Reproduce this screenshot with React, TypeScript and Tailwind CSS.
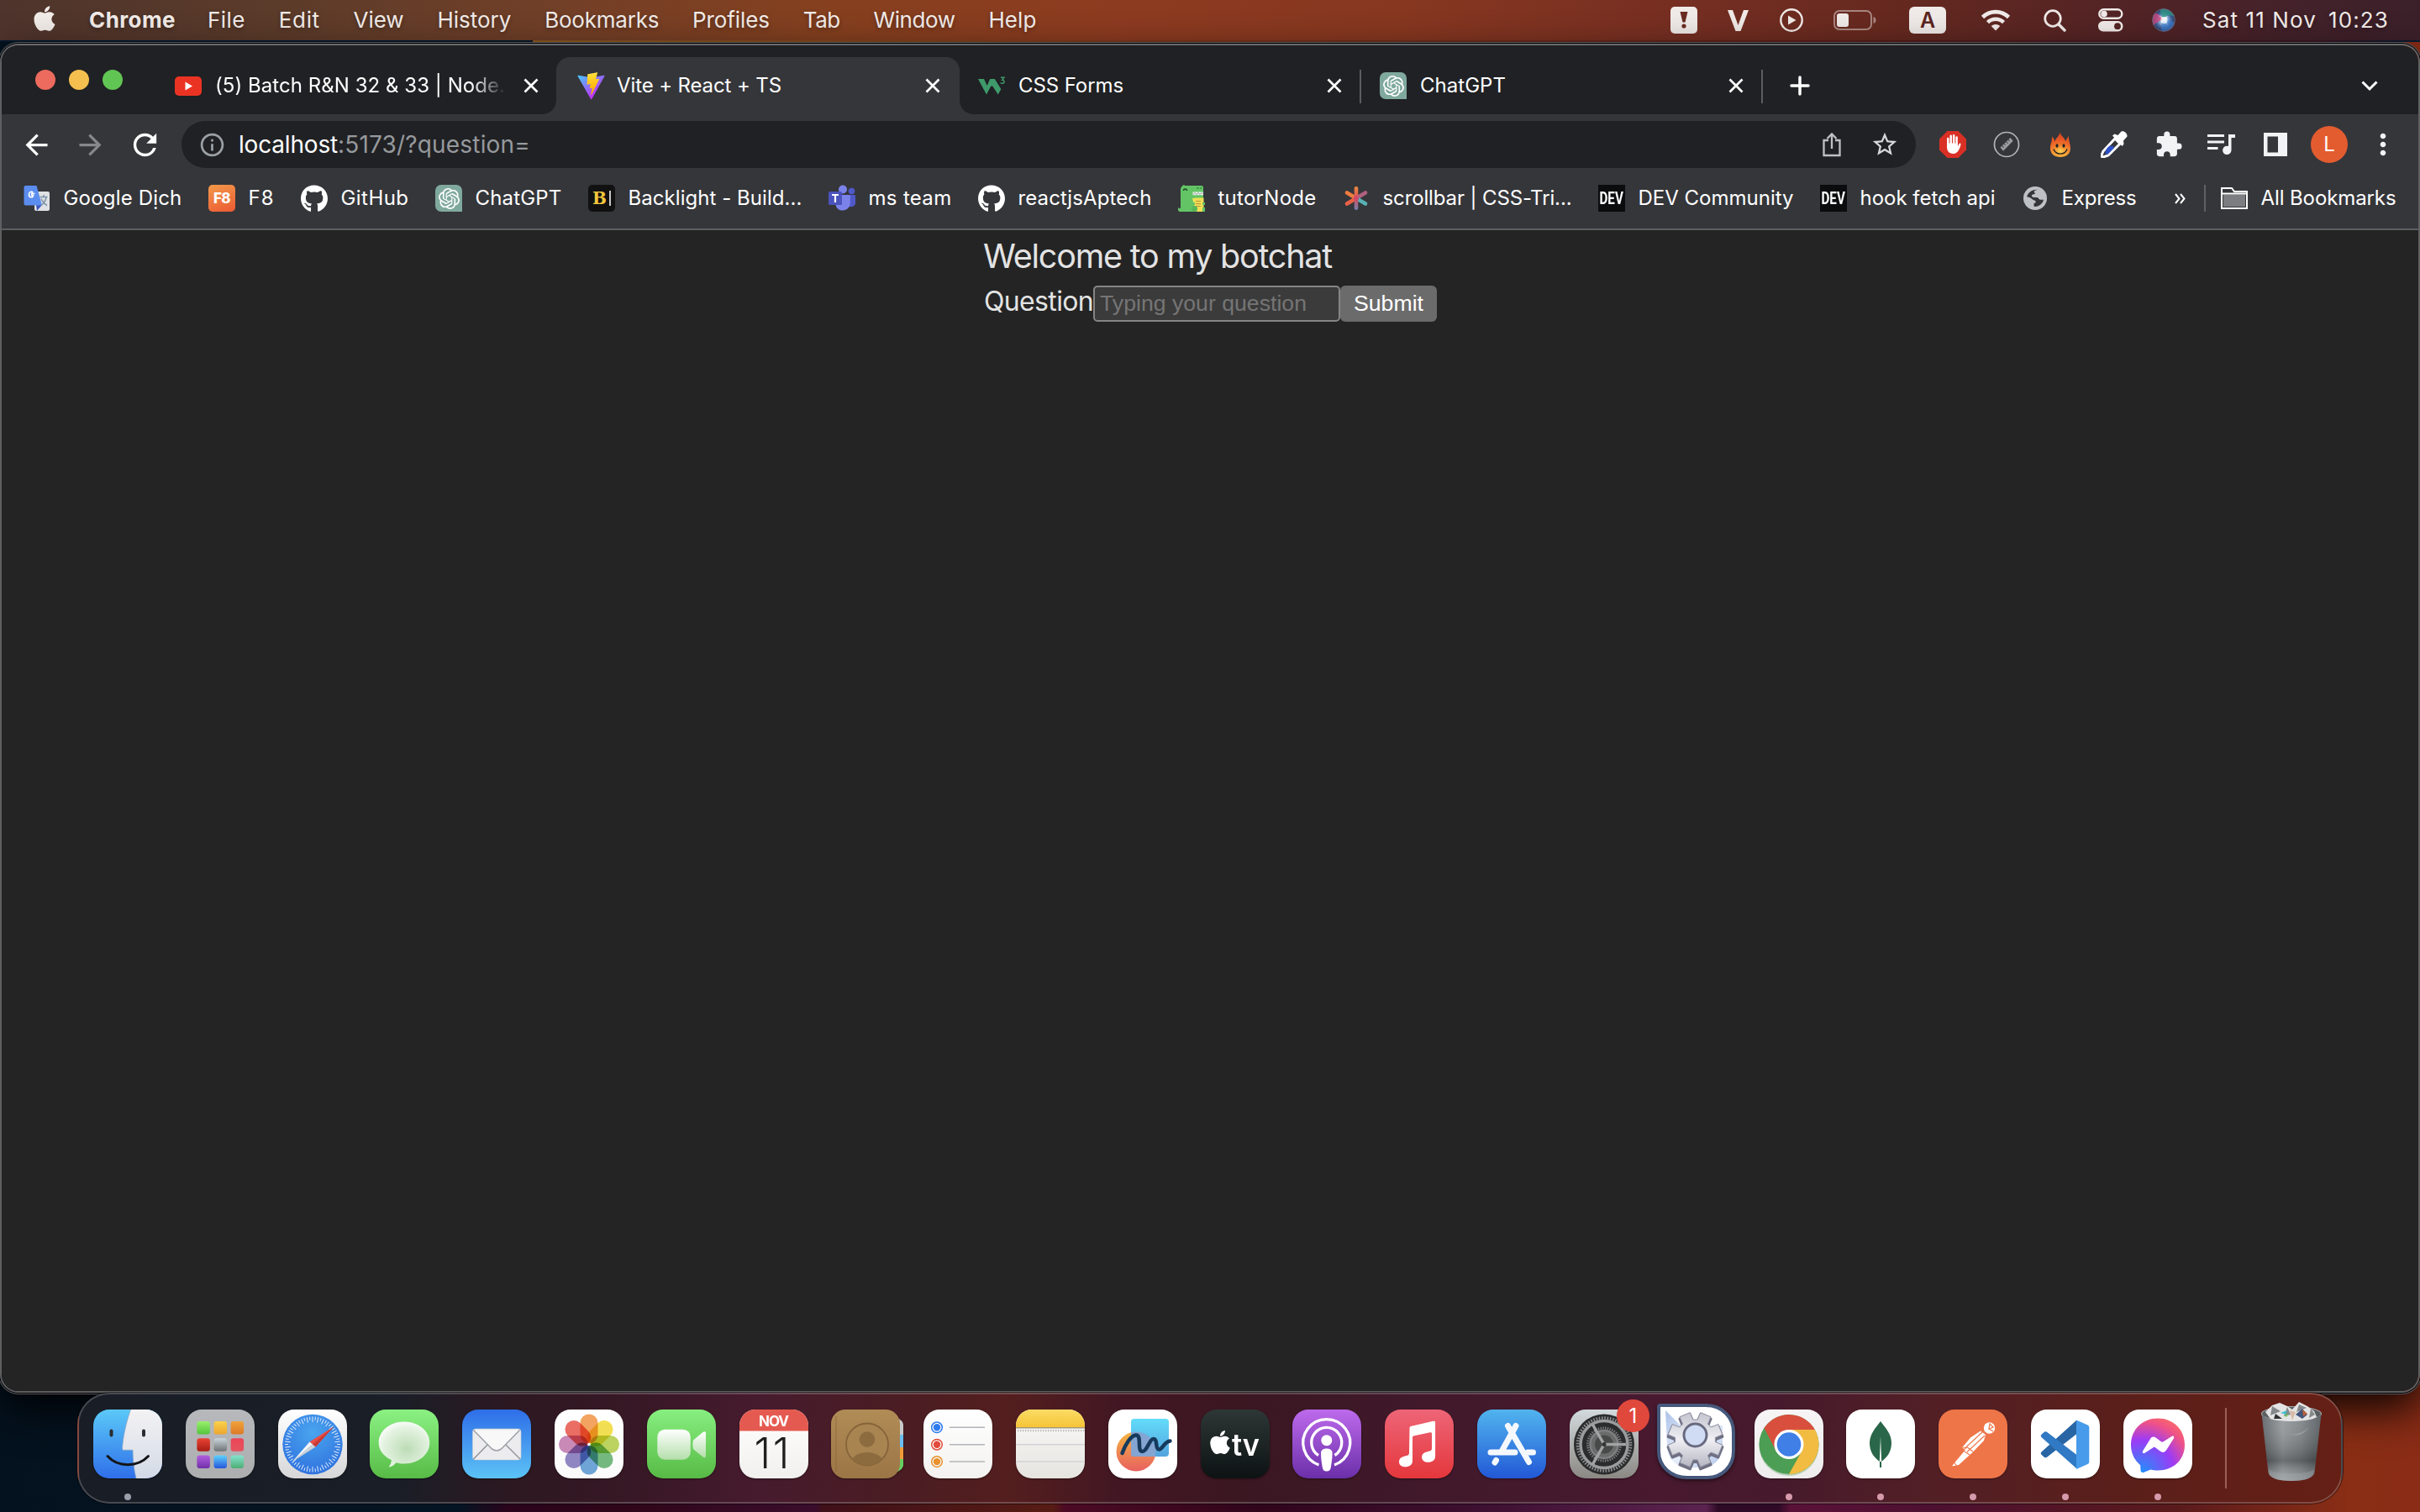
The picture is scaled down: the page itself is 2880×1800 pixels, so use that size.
import React, { useLayoutEffect, useRef, useState } from "react";
import { FaApple, FaGithub } from "react-icons/fa6";
import { SiOpenai } from "react-icons/si";
import {
  MdArrowBack,
  MdArrowForward,
  MdRefresh,
  MdInfoOutline,
  MdExtension,
  MdStarBorder,
  MdMoreVert,
} from "react-icons/md";

/* Single-line label whose tracking is adjusted so that it fills the given width. */
function Label({ w, className = "", children }: { w: number; className?: string; children: string }) {
  const ref = useRef<HTMLSpanElement>(null);
  const [tracking, setTracking] = useState(0);
  useLayoutEffect(() => {
    if (ref.current) {
      const natural = ref.current.getBoundingClientRect().width;
      setTracking((w - natural) / children.length);
    }
  }, [w, children]);
  return (
    <span className={`block shrink-0 whitespace-pre ${className}`} style={{ width: w }}>
      <span ref={ref} style={{ letterSpacing: tracking }}>
        {children}
      </span>
    </span>
  );
}

/* ---------------------------------------------------------------- menu bar */

const menus = [
  { t: "File", w: 45 },
  { t: "Edit", w: 49 },
  { t: "View", w: 60 },
  { t: "History", w: 88 },
  { t: "Bookmarks", w: 136 },
  { t: "Profiles", w: 92 },
  { t: "Tab", w: 44 },
  { t: "Window", w: 97 },
  { t: "Help", w: 57 },
];

function MenuBar() {
  return (
    <div className="flex h-12 w-full shrink-0 items-center bg-[linear-gradient(90deg,#4e342c_0%,#5b3b2a_11%,#703f28_22%,#85401f_34%,#8d3b20_46%,#873720_58%,#752e22_70%,#66291f_78%,#562424_86%,#45222a_94%,#3b202a_100%)] pl-[39px] text-[26px] leading-[48px] text-[#f2ece9] [text-shadow:0_2px_5px_rgba(0,0,0,0.35)]">
      <FaApple className="mt-[-5px] size-[34px] shrink-0 -translate-x-[3px]" />
      <Label w={103} className="ml-[33px] font-bold">Chrome</Label>
      <div className="ml-[38px] flex gap-[39.8px]">
        {menus.map((m) => (
          <Label key={m.t} w={m.w}>{m.t}</Label>
        ))}
      </div>
      <div className="ml-auto flex items-center pr-[37px]">
        <div className="flex size-8 items-center justify-center rounded-[5px] bg-[#f0eae8]">
          <svg className="h-5 w-3" viewBox="0 0 12 20">
            <path d="M1.500 0h9L7.500 12.500h-3z" fill="#6b2c22" />
            <circle cx="6" cy="17" r="2.600" fill="#6b2c22" />
          </svg>
        </div>
        <svg className="ml-9 h-[25px] w-[25px]" viewBox="0 0 25 25">
          <path d="M0 0h6l6.500 18L19 0h6l-9.500 25h-6z" fill="#f0eae8" />
        </svg>
        <svg className="ml-[37px] size-7" viewBox="0 0 28 28">
          <circle cx="14" cy="14" r="12.700" fill="none" stroke="#f0eae8" strokeWidth="2.400" />
          <path d="M10 8.500v11l9.500-5.500z" fill="#f0eae8" />
        </svg>
        <svg className="ml-9 h-6 w-[52px]" viewBox="0 0 52 24">
          <rect x="1" y="1" width="44" height="22" rx="6" fill="none" stroke="#a98680" strokeWidth="2" />
          <rect x="4" y="4" width="14" height="16" rx="3" fill="#f0eae8" />
          <path d="M47.500 8c4 1 4 7 0 8z" fill="#a98680" />
        </svg>
        <div className="ml-[38px] flex h-8 w-11 items-center justify-center rounded-[6px] bg-[#f0eae8] text-[25px] font-semibold leading-8 text-[#5c2420] [text-shadow:none]">
          A
        </div>
        <svg className="ml-[41px] h-[26px] w-[36px]" viewBox="0 0 36 26" fill="none" stroke="#f0eae8">
          <path d="M2.500 9.500a22 22 0 0 1 31 0" strokeWidth="4.600" />
          <path d="M8.500 15.600a13.500 13.500 0 0 1 19 0" strokeWidth="4.600" />
          <path d="M18 25.500l-5.300-5.500a7.800 7.800 0 0 1 10.600 0z" fill="#f0eae8" stroke="none" />
        </svg>
        <svg className="ml-[39px] h-[27px] w-[27px]" viewBox="0 0 27 27" fill="none" stroke="#f0eae8">
          <circle cx="11" cy="11" r="9.300" strokeWidth="2.700" />
          <path d="M18 18l7 7" strokeWidth="3.400" strokeLinecap="round" />
        </svg>
        <svg className="ml-[38px] h-7 w-[30px]" viewBox="0 0 30 28">
          <rect x="1.300" y="1.300" width="27" height="10.500" rx="5.250" fill="none" stroke="#f0eae8" strokeWidth="2.400" />
          <circle cx="7" cy="6.500" r="3.800" fill="#f0eae8" />
          <rect x="0" y="15" width="29.500" height="12.500" rx="6.200" fill="#f0eae8" />
          <circle cx="23" cy="21.200" r="3.900" fill="#542524" />
        </svg>
        <svg className="ml-[34px] size-7" viewBox="0 0 28 28">
          <defs>
            <radialGradient id="siri" cx="50%" cy="50%" r="50%">
              <stop offset="0" stopColor="#ffffff" />
              <stop offset=".25" stopColor="#b9d9ef" />
              <stop offset=".6" stopColor="#4a6fa8" />
              <stop offset="1" stopColor="#23304f" />
            </radialGradient>
            <clipPath id="siriC"><circle cx="14" cy="14" r="13.500" /></clipPath>
          </defs>
          <g clipPath="url(#siriC)">
            <rect width="28" height="28" fill="url(#siri)" />
            <path d="M0 6C6 4 12 10 14 14C8 14 2 20 0 22z" fill="#d8457e" opacity=".75" />
            <path d="M10 0c10-2 18 4 17 10C20 6 16 8 14 14C11 8 9 4 10 0z" fill="#2f9a83" opacity=".75" />
            <path d="M14 14c6-2 10 2 14 3-2 8-8 12-14 11-4-2-4-8 0-14z" fill="#3e7fd6" opacity=".6" />
            <circle cx="14.500" cy="14" r="4" fill="#fff" opacity=".8" />
            <path d="M14 14L7 8l7 3 6-2-4 4 3 7z" fill="#fff" opacity=".55" />
          </g>
          <circle cx="14" cy="14" r="13.300" fill="none" stroke="#6a6a84" strokeWidth="1" />
        </svg>
        <Label w={136} className="ml-[32px]">Sat 11 Nov</Label>
        <Label w={72} className="ml-[14px]">10:23</Label>
      </div>
    </div>
  );
}

/* ---------------------------------------------------------------- tabs */

function Close() {
  return (
    <svg className="size-[18px] shrink-0" viewBox="0 0 18 18" stroke="#fff" strokeWidth="2.700" strokeLinecap="butt">
      <path d="M1.500 1.500l15 15M16.500 1.500l-15 15" />
    </svg>
  );
}

function ViteLogo() {
  return (
    <svg className="h-[33px] w-[35px] shrink-0" viewBox="0 0 410 404">
      <defs>
        <linearGradient id="v1" x1="6" y1="33" x2="235" y2="344" gradientUnits="userSpaceOnUse">
          <stop stopColor="#41D1FF" />
          <stop offset="1" stopColor="#BD34FE" />
        </linearGradient>
        <linearGradient id="v2" x1="194" y1="8" x2="236" y2="292" gradientUnits="userSpaceOnUse">
          <stop stopColor="#FFEA83" />
          <stop offset=".083" stopColor="#FFDD35" />
          <stop offset="1" stopColor="#FFA800" />
        </linearGradient>
      </defs>
      <path d="M399.641 59.525L215.643 388.545C211.844 395.338 202.084 395.378 198.228 388.618L10.582 59.556C6.381 52.190 12.680 43.267 21.028 44.759L205.223 77.682C206.398 77.892 207.601 77.890 208.776 77.676L389.119 44.806C397.439 43.289 403.768 52.143 399.641 59.525Z" fill="url(#v1)" />
      <path d="M292.965 1.574L156.801 28.255C154.563 28.694 152.906 30.590 152.771 32.866L144.395 174.330C144.198 177.662 147.258 180.248 150.510 179.498L188.420 170.749C191.967 169.931 195.172 173.055 194.443 176.622L183.180 231.775C182.422 235.487 185.907 238.661 189.532 237.560L212.947 230.446C216.577 229.344 220.065 232.527 219.297 236.242L201.398 322.875C200.278 328.294 207.486 331.249 210.492 326.603L212.500 323.500L323.454 102.072C325.312 98.365 322.108 94.137 318.036 94.923L279.014 102.454C275.347 103.161 272.227 99.746 273.262 96.158L298.731 7.867C299.767 4.273 296.636 .855 292.965 1.574Z" fill="url(#v2)" />
    </svg>
  );
}

function GptIcon() {
  return (
    <div className="flex size-8 shrink-0 items-center justify-center rounded-[7px] rounded-br-none bg-[#80a99d]">
      <SiOpenai className="size-[25px] text-white" />
    </div>
  );
}

function TabStrip() {
  return (
    <div className="flex h-[82px] w-full shrink-0 bg-[#202124] text-[24px] leading-[38px] text-white">
      <div className="flex h-[82px] w-[660px] items-center pl-[40px]">
        <div className="flex gap-4 pb-0">
          <span className="size-6 rounded-full bg-[#ed6a5e]" />
          <span className="size-6 rounded-full bg-[#f5bf4f]" />
          <span className="size-6 rounded-full bg-[#61c554]" />
        </div>
        <svg className="ml-[62px] mt-[14px] h-[23px] w-8 shrink-0" viewBox="0 0 32 23">
          <rect width="32" height="23" rx="5" fill="#eb3323" />
          <path d="M12.500 6.500v10l8.500-5z" fill="#fff" />
        </svg>
        <div className="ml-[16px] mt-[14px] w-[346px] [mask-image:linear-gradient(90deg,#000_88%,transparent_100%)]">
          <Label w={345}>(5) Batch R&amp;N 32 &amp; 33 | Node.</Label>
        </div>
        <div className="ml-[21px] mt-[14px] flex"><Close /></div>
      </div>
      <div className="relative mt-[14px] flex h-[68px] w-[480px] items-center rounded-t-2xl bg-[#35363a] pl-6">
        <span className="absolute -left-4 bottom-0 size-4 bg-[radial-gradient(circle_at_0_0,transparent_15.5px,#35363a_16px)]" />
        <span className="absolute -right-4 bottom-0 size-4 bg-[radial-gradient(circle_at_100%_0,transparent_15.5px,#35363a_16px)]" />
        <ViteLogo />
        <Label w={196} className="ml-[13px]">Vite + React + TS</Label>
        <div className="ml-auto flex pr-[23px]"><Close /></div>
      </div>
      <div className="mt-[14px] flex h-[68px] w-[476px] items-center pl-[22px]">
        <svg className="h-[23px] w-8 shrink-0" viewBox="0 0 32 23">
          <path d="M0 3h7l3.700 8L14.200 3h5.600L27.300 15l-3.500 6.500L17.200 11.500h-1.900L10 21.500z" fill="#3f9a6b" />
          <path d="M27 1.200h4l-2.300 3c2.200 0 2.700 1.800 2.200 3-.8 1.500-3.400 1.600-4.100 0" fill="none" stroke="#3f9a6b" strokeWidth="1.400" />
        </svg>
        <Label w={125} className="ml-[16px]">CSS Forms</Label>
        <div className="ml-auto flex pr-[21px]"><Close /></div>
      </div>
      <span className="mt-[29px] h-10 w-0.5 bg-[#5c5d60]" />
      <div className="mt-[14px] flex h-[68px] w-[476px] items-center pl-[22px]">
        <GptIcon />
        <Label w={102} className="ml-[16px]">ChatGPT</Label>
        <div className="ml-auto flex pr-[21px]"><Close /></div>
      </div>
      <span className="mt-[29px] h-10 w-0.5 bg-[#5c5d60]" />
      <svg className="ml-[32px] mt-9 size-6" viewBox="0 0 24 24" stroke="#fff" strokeWidth="3.500" strokeLinecap="round">
        <path d="M2 12h20M12 2v20" />
      </svg>
      <svg className="ml-auto mr-[48px] mt-[42px] h-[13px] w-5" viewBox="0 0 20 13" fill="none" stroke="#fff" strokeWidth="3">
        <path d="M1.500 1.500L10 10l8.500-8.500" />
      </svg>
    </div>
  );
}

/* ---------------------------------------------------------------- toolbar */

function Toolbar() {
  return (
    <div className="flex h-[72px] w-full shrink-0 items-center bg-[#35363a] pl-[22px] text-[28px] leading-[56px]">
      <div className="flex items-center gap-[25px] text-white">
        <MdArrowBack className="size-[39px]" />
        <MdArrowForward className="size-[39px] text-[#87888b]" />
        <MdRefresh className="size-[41px]" />
      </div>
      <div className="ml-[23px] flex h-14 w-[2064px] items-center rounded-full bg-[#202124] pl-5 pr-[20px]">
        <MdInfoOutline className="size-[33px] text-[#9aa0a6]" />
        <Label w={118} className="ml-[15px] text-white">localhost</Label>
        <Label w={229} className="text-[#96999d]">:5173/?question=</Label>
        <svg className="ml-auto h-[30px] w-[22px]" viewBox="0 0 22 30" fill="none" stroke="#bdc1c6" strokeWidth="2.300">
          <path d="M7 10H1.500v18h19V10H15M11 20V2.500M5.500 8L11 2.500 16.500 8" />
        </svg>
        <MdStarBorder className="ml-[35px] size-[34px] text-[#d5d7da]" />
      </div>
      <div className="ml-7 flex items-center">
        <svg className="size-8" viewBox="0 0 32 32">
          <path d="M9.500 0h13L32 9.500v13L22.500 32h-13L0 22.500v-13z" fill="#d93025" />
          <path d="M10.300 17V9M13.700 16V5.700M17.200 16V5.200M20.600 17V7.500" stroke="#fff" strokeWidth="2.500" strokeLinecap="round" />
          <path d="M9 14.500h12.900v4l1.600-3.300c.7-1.200 2.200-.8 2 .6-.6 4-3.200 11.200-8.900 11.200C11 27 9 23 9 19z" fill="#fff" />
        </svg>
        <svg className="ml-8 size-8" viewBox="0 0 32 32">
          <circle cx="16" cy="16" r="14.500" fill="none" stroke="#b4b5b7" strokeWidth="1.700" />
          <path d="M8.500 19.500L20.500 8l3.200 3.700-11.700 12z" fill="#9a9b9d" />
          <path d="M10.500 17.500l2 2M13 15l1.500 1.700M15.500 12.700l2 2M18 10.300l1.500 1.700" stroke="#45464a" strokeWidth="1.100" />
        </svg>
        <svg className="ml-[36px] h-8 w-[24px]" viewBox="0 0 24 32">
          <defs>
            <linearGradient id="fire" x1="0" y1="0" x2="0" y2="1">
              <stop offset="0" stopColor="#d8401f" />
              <stop offset=".55" stopColor="#ef6a2a" />
              <stop offset="1" stopColor="#f9b136" />
            </linearGradient>
            <radialGradient id="face" cx="50%" cy="65%" r="50%">
              <stop offset="0" stopColor="#fbd552" />
              <stop offset="1" stopColor="#f28a2c" stopOpacity=".2" />
            </radialGradient>
          </defs>
          <path d="M11.500 1c.5 5 5.500 6 6.500 11 1.500-2 2.500-4.500 4-6-.5 5 2 9 2 14.500C24 27 19 31 12 31S0 27 0 20.500C0 15 2.500 12 2 6.500 4 8 5 10.500 5.500 12.500 6.500 8 11 6.500 11.500 1z" fill="url(#fire)" />
          <ellipse cx="12" cy="21" rx="11" ry="9.500" fill="url(#face)" />
          <ellipse cx="8" cy="17.500" rx="1.500" ry="2.300" fill="#222" />
          <ellipse cx="16" cy="17.500" rx="1.500" ry="2.300" fill="#222" />
          <path d="M4 21.500c2.500 7.500 13.500 7.500 16 0" fill="none" stroke="#222" strokeWidth="1.400" />
        </svg>
        <svg className="ml-[36px] size-8" viewBox="0 0 32 32">
          <path d="M3 24L17 9l6 6L9 29l-6 2-2.500-1z" fill="none" stroke="#fff" strokeWidth="3" />
          <path d="M5 27l2-6 3.500-3.500 4.500.5 1 2-7.500 7.500z" fill="#2b50c8" />
          <path d="M14 5.500l2.500-2 4 1.500 4-4.500c3-1.500 7.500 2 7 6L27 11.500l.5 4-2 2.500z" fill="#fff" />
        </svg>
        <MdExtension className="ml-[32px] size-[34px] text-[#f1f3f4]" />
        <svg className="ml-[29px] h-[26px] w-[34px]" viewBox="0 0 34 26">
          <path d="M0 2.500h20M0 10h20M0 17.500h12.500" stroke="#f1f3f4" strokeWidth="3" />
          <path d="M25 1h8v4h-4.500v15a5.200 5.200 0 1 1-3.500-5z" fill="#f1f3f4" />
        </svg>
        <svg className="ml-[33px] size-7" viewBox="0 0 28 28">
          <path d="M0 0h28v28H0zM4.500 4.500v19H17v-19z" fill="#f1f3f4" fillRule="evenodd" />
        </svg>
        <div className="ml-7 flex size-11 items-center justify-center rounded-full bg-[#e35c30] text-[24px] leading-none text-white">L</div>
        <MdMoreVert className="ml-[22px] size-10 text-[#f1f3f4]" />
      </div>
    </div>
  );
}

/* ---------------------------------------------------------------- bookmarks */

const translateIcon = (
  <svg className="size-8" viewBox="0 0 32 32">
    <rect x="13" y="8" width="18" height="23" rx="2" fill="#dfe1e4" />
    <path d="M15 24h7l-6 7z" fill="#3d56c0" />
    <path d="M2.500 1h13l6.500 23.500H2.500a2 2 0 0 1-2-2V3a2 2 0 0 1 2-2z" fill="#5b8def" />
    <path d="M13.500 10.500H9.800v2h1.700c-.5 3.200-5 3-5-.8 0-3.500 3.200-4.300 4.800-2.300" fill="none" stroke="#fff" strokeWidth="1.700" />
    <path d="M19.500 14.500h9M24 12v2.500M27 15c-1 5-4 8-6 9.500M21 16.500c1.500 4 4.500 6.500 7 8" fill="none" stroke="#7e93a8" strokeWidth="1.500" />
  </svg>
);
const f8Icon = (
  <div className="flex size-8 items-center justify-center rounded-[5px] bg-[linear-gradient(160deg,#f29a4a,#ec5a33)] text-[17px] font-extrabold tracking-[-0.5px] text-white">
    F8
  </div>
);
const blIcon = (
  <div className="flex size-8 items-center justify-center gap-[3px] rounded-[5px] bg-[#111]">
    <span className="font-['DejaVu_Serif'] text-[20px] font-bold leading-8 text-[#f3c63c]">B</span>
    <span className="h-[18px] w-[2px] bg-[#c8c8c8]" />
  </div>
);
const teamsIcon = (
  <svg className="size-8" viewBox="0 0 32 32">
    <circle cx="27.500" cy="7.500" r="3.800" fill="#5059c9" />
    <path d="M22 12h9a1.200 1.200 0 0 1 1.200 1.200V21c0 5-6 7-9 3.500z" fill="#5059c9" />
    <circle cx="17" cy="5.500" r="5" fill="#7b83eb" />
    <path d="M10 12h14.500a1.300 1.300 0 0 1 1.300 1.300V22a9 9 0 0 1-17 3.500z" fill="#7b83eb" />
    <rect x="0" y="8" width="16" height="16" rx="1.500" fill="#4b53bc" />
    <path d="M4 12h8M8 12v9" stroke="#fff" strokeWidth="2.200" />
  </svg>
);
const dinoIcon = (
  <svg className="size-8" viewBox="0 0 32 32">
    <path d="M3 5c0-1 1-2.500 2-3.500L6.500 0l2 1h19c1.500 0 2.500.7 2.500 2.500V32H1.500C-.5 30.500-.5 28 .5 27c.8 1.500 2 1.700 2.500 0z" fill="#63c466" />
    <path d="M6.500 7c0-2.700 4-2.700 4 0" fill="none" stroke="#1d4a22" strokeWidth="1.500" />
    <path d="M22.500 4h2M26.500 4h1.500" stroke="#2e7a35" strokeWidth="1.600" />
    <path d="M17.500 8.500H30v3.800H17.500z" fill="#eef5ef" />
    <path d="M18 11.500l2-2 2 2 2-2 2 2 2-2 2 2" stroke="#7f8a80" strokeWidth=".9" fill="none" />
    <path d="M17 16l4-.5h9.500V32H24c-2 0-4-1-4-3z" fill="#efdf55" />
    <path d="M21 19.500h6M21 22.500h6M21 25.500h6" stroke="#b8923a" strokeWidth="1.200" />
    <path d="M16 21h4v3h-4zM29 21h3v3h-3z" fill="#63c466" />
    <circle cx="19.500" cy="28.500" r="3.500" fill="#55b65a" />
    <path d="M29 27h3v5h-3z" fill="#63c466" />
  </svg>
);
const starIcon = (
  <svg className="size-8" viewBox="0 0 32 32" strokeWidth="4.600" strokeLinecap="round">
    <defs>
      <linearGradient id="ct" x1="0" y1="2" x2="0" y2="30" gradientUnits="userSpaceOnUse">
        <stop offset="0" stopColor="#f08c3a" />
        <stop offset=".5" stopColor="#d8505f" />
        <stop offset="1" stopColor="#6d7fb0" />
      </linearGradient>
    </defs>
    <path d="M16 16L5 9.500" stroke="#ee7b3e" />
    <path d="M16 16l-11 6.500" stroke="#ea6246" />
    <path d="M16 16l11-6.500" stroke="#b0617f" />
    <path d="M16 16l11 6.500" stroke="#58b2b4" />
    <path d="M16 4.300l.01 23.400" stroke="url(#ct)" />
    <circle cx="16" cy="16" r="3" fill="#d2486a" />
  </svg>
);
const devIcon = (
  <div className="flex size-8 items-center justify-center bg-[#0b0c0d]">
    <span className="scale-x-[0.76] font-['Roboto'] text-[20px] font-bold leading-8 text-white">DEV</span>
  </div>
);
const globeIcon = (
  <svg className="size-8" viewBox="0 0 32 32">
    <circle cx="16" cy="16" r="14" fill="#bdc1c6" />
    <path d="M19.500 5.500c-1.500 1-3.500.8-4.500 2-.8 1.200.2 2.300 1.500 2.500-1 1.500-3.500.8-4.500 2.500-.8 1.500 1 2.500 3 2.500h3c1.800 0 2 2 3.500 2.500 1.300.5 3 .2 4.500.3-.8 4-4.500 8-10 8.200-1 0-1.500-.5-1.500-1.500v-2.500c2 0 2.500-1.200 2-2.500-.5-1.200-2.500-1-3.500-2-1.800-1.800-4.500-3-8-3.500C4.500 9.500 9 5 15 4.800z" fill="#35363a" />
    <path d="M19.500 5.500c-2 .5-6 .3-9 2.500C8 10 6.500 12 6 14.500 4.500 17 7 22 10 24.500L5 23 2.500 16 6 7l9-4.800z" fill="#bdc1c6" />
  </svg>
);
const gh = <FaGithub className="size-[33px] text-white" />;

const bookmarks = [
  { icon: translateIcon, t: "Google Dịch", w: 141 },
  { icon: f8Icon, t: "F8", w: 31 },
  { icon: gh, t: "GitHub", w: 81 },
  { icon: <GptIcon />, t: "ChatGPT", w: 103 },
  { icon: blIcon, t: "Backlight - Build...", w: 207 },
  { icon: teamsIcon, t: "ms team", w: 99 },
  { icon: gh, t: "reactjsAptech", w: 159 },
  { icon: dinoIcon, t: "tutorNode", w: 117 },
  { icon: starIcon, t: "scrollbar | CSS-Tri...", w: 225 },
  { icon: devIcon, t: "DEV Community", w: 185 },
  { icon: devIcon, t: "hook fetch api", w: 161 },
  { icon: globeIcon, t: "Express", w: 89 },
];

function BookmarksBar() {
  return (
    <div className="flex h-16 w-full shrink-0 items-center bg-[#35363a] pb-2 pl-[26px] text-[24px] leading-10 text-white">
      <div className="flex gap-[31.500px]">
        {bookmarks.map((b, i) => (
          <div key={i} className="flex h-10 items-center">
            <span className="mr-[15.500px] flex w-8 shrink-0 items-center justify-center">{b.icon}</span>
            <Label w={b.w}>{b.t}</Label>
          </div>
        ))}
      </div>
      <svg className="ml-[45px] h-[13px] w-[13px]" viewBox="0 0 13 13" fill="none" stroke="#fff" strokeWidth="2">
        <path d="M1 1l4.500 5.500L1 12M7 1l4.500 5.500L7 12" />
      </svg>
      <span className="ml-[22px] h-8 w-0.5 bg-[#5f6064]" />
      <svg className="ml-[18px] h-[26px] w-8" viewBox="0 0 32 26">
        <path d="M1 1h12l3 4h15v20H1z" fill="none" stroke="#fff" strokeWidth="2" />
        <path d="M3 8.500h26V23H3z" fill="#7c7d80" />
        <path d="M1 7.500h30" stroke="#fff" strokeWidth="2" />
      </svg>
      <Label w={161} className="ml-[16px]">All Bookmarks</Label>
    </div>
  );
}

/* ---------------------------------------------------------------- page */

function Page() {
  return (
    <div className="flex-1 bg-[#242424] pl-[1168px] pt-px text-[#e3e3e3]">
      <Label w={415} className="text-[39.5px] leading-[60px]">Welcome to my botchat</Label>
      <form className="mt-[5px] flex h-[44px] pl-px" onSubmit={(e) => e.preventDefault()}>
        <Label w={130} className="text-[32px] leading-[38px]">Question</Label>
        <div className="flex h-[43px] w-[294px] items-center rounded-[5px] border-2 border-[#858585] bg-[#3b3b3b] pl-[6px] font-['Liberation_Sans'] text-[26.67px] leading-[43px] text-[#757575]">
          <Label w={246}>Typing your question</Label>
        </div>
        <button className="flex h-[43px] w-[115px] items-center justify-center rounded-[6px] bg-[#6b6b6b] font-['Liberation_Sans'] text-[26.67px] leading-[43px] text-white">
          Submit
        </button>
      </form>
    </div>
  );
}

/* ---------------------------------------------------------------- dock */

function Tile({ id, from, to, children }: { id: string; from: string; to: string; children?: React.ReactNode }) {
  return (
    <svg className="size-[82px] overflow-visible drop-shadow-[0_1px_1px_rgba(0,0,0,0.4)]" viewBox="0 0 82 82">
      <defs>
        <linearGradient id={`${id}-bg`} x1="0" y1="0" x2="0" y2="1">
          <stop offset="0" stopColor={from} />
          <stop offset="1" stopColor={to} />
        </linearGradient>
        <clipPath id={`${id}-clip`}>
          <rect width="82" height="82" rx="19" />
        </clipPath>
      </defs>
      <g clipPath={`url(#${id}-clip)`}>
        <rect width="82" height="82" fill={`url(#${id}-bg)`} />
        {children}
      </g>
    </svg>
  );
}

function Finder() {
  return (
    <Tile id="finder" from="#5bc9f8" to="#2f6fea">
      <defs>
        <linearGradient id="fface" x1="0" y1="0" x2="0" y2="1">
          <stop offset="0" stopColor="#f3f2f4" />
          <stop offset="1" stopColor="#d3dae6" />
        </linearGradient>
      </defs>
      <path d="M44.500 0C39 16 35.500 32 34.500 46c0 1.500.5 2.300 2 2.300H47c0 12 1.500 23 4 34h31V0z" fill="url(#fface)" />
      <path d="M44.500 0C39 16 35.500 32 34.500 46c0 1.500.5 2.300 2 2.300H47c0 12 1.500 23 4 34" fill="none" stroke="#8aa6c8" strokeWidth=".8" />
      <path d="M21.500 25.500v5M60 25.500v5" stroke="#2a2c30" strokeWidth="4" strokeLinecap="round" />
      <path d="M17 55.500c12 13.500 36 13.500 48.500 0" fill="none" stroke="#141518" strokeWidth="3" strokeLinecap="round" />
    </Tile>
  );
}

const padColors: [string, string][] = [
  ["#9af06e", "#53c43a"], ["#f9d24c", "#eda52f"], ["#f0a33c", "#dd7a27"],
  ["#ea4434", "#a81d14"], ["#c9d6dc", "#6f7375"], ["#ed4459", "#e4545e"],
  ["#b25fe0", "#7030a8"], ["#5ed3fb", "#2756dc"], ["#84e3cf", "#4fae75"],
];
function Launchpad() {
  return (
    <Tile id="lp" from="#b7b8bb" to="#adaeb0">
      {padColors.map(([a, b], i) => (
        <g key={i}>
          <linearGradient id={`pad${i}`} x1="0" y1="0" x2="0" y2="1">
            <stop offset="0" stopColor={a} />
            <stop offset="1" stopColor={b} />
          </linearGradient>
          <rect x={13.4 + (i % 3) * 20.1} y={14 + Math.floor(i / 3) * 20.2} width="15.500" height="15.500" rx="3.200" fill={`url(#pad${i})`} />
        </g>
      ))}
    </Tile>
  );
}

function Safari() {
  return (
    <Tile id="saf" from="#ffffff" to="#d6d6d8">
      <defs>
        <radialGradient id="safb" cx="50%" cy="30%" r="75%">
          <stop offset="0" stopColor="#4aa5ef" />
          <stop offset="1" stopColor="#2e6fdd" />
        </radialGradient>
      </defs>
      <circle cx="41" cy="41.500" r="35.700" fill="url(#safb)" />
      {Array.from({ length: 60 }, (_, i) => (
        <path
          key={i}
          d={i % 2 ? "M41 8.500v4" : "M41 8.500v6.500"}
          stroke="#dbe9fb"
          strokeWidth="1"
          transform={`rotate(${i * 6} 41 41.5)`}
        />
      ))}
      <path d="M66 20.500L37.500 38.500l7 6z" fill="#ea4f46" />
      <path d="M66 20.500L41 41.500l3.500 3z" fill="#c93a34" />
      <path d="M16.500 62.500l21-24 3.500 3z" fill="#f6f6f6" />
      <path d="M16.500 62.500l28-18-3.500-3z" fill="#cfd2d6" />
    </Tile>
  );
}

function Messages() {
  return (
    <Tile id="msg" from="#8bf183" to="#57bb46">
      <defs>
        <radialGradient id="bub" cx="55%" cy="60%" r="65%">
          <stop offset="0" stopColor="#bddcb6" />
          <stop offset=".7" stopColor="#e3f2e0" />
          <stop offset="1" stopColor="#ffffff" />
        </radialGradient>
      </defs>
      <path d="M41 14.500c17 0 30.300 11 30.300 25S58 64.500 41 64.500c-3.500 0-6.500-.5-9.500-1.300-2.500 3-5.500 5-9 5.300 2-2.500 3.500-5.500 3.200-8.500C16 55.500 10.700 48 10.700 39.500c0-14 13.300-25 30.300-25z" fill="url(#bub)" />
    </Tile>
  );
}

function Mail() {
  return (
    <Tile id="mail" from="#2e6ee8" to="#5cc3f6">
      <rect x="12.500" y="23" width="57.500" height="37" rx="3.500" fill="#ececee" stroke="#c8ccd2" strokeWidth=".6" />
      <path d="M13.500 59L32 40M69 59L50 40" stroke="#8b8f96" strokeWidth="1.300" />
      <path d="M13.500 24.500L34 45.500c4 4.500 10 4.500 14 0l20.500-21" fill="#f8f8f9" stroke="#9da1a7" strokeWidth="1.500" />
    </Tile>
  );
}

const petals = ["#f2994a", "#f3dc3a", "#b5cf4b", "#63b26f", "#5c9bd5", "#8379bd", "#c47bb0", "#ea5a50"];
function Photos() {
  return (
    <Tile id="ph" from="#ffffff" to="#fafafa">
      {petals.map((c, i) => (
        <rect
          key={c}
          x="30.500"
          y="5.500"
          width="21"
          height="35"
          rx="10.500"
          fill={c}
          className="mix-blend-multiply"
          opacity=".88"
          transform={`rotate(${i * 45} 41 41.5)`}
        />
      ))}
      <circle cx="41" cy="41.500" r="1.800" fill="#fff" />
    </Tile>
  );
}

function FaceTime() {
  return (
    <Tile id="ft" from="#87ef80" to="#57ba45">
      <defs>
        <linearGradient id="ftg" x1="0" y1="0" x2="0" y2="1">
          <stop offset="0" stopColor="#fff" />
          <stop offset="1" stopColor="#b4dfab" />
        </linearGradient>
      </defs>
      <rect x="12.300" y="23.700" width="39.500" height="36" rx="9" fill="url(#ftg)" />
      <path d="M55.500 36l11-9c2-1.500 3.500-.7 3.500 1.200v27c0 2-1.500 2.700-3.500 1.200l-11-9c-1.500-1.300-1.500-10 0-11.400z" fill="url(#ftg)" />
    </Tile>
  );
}

function Calendar() {
  return (
    <Tile id="cal" from="#ffffff" to="#f1f0ee">
      <rect width="82" height="25.500" fill="#e55a50" />
      <text x="41" y="19.700" textAnchor="middle" fontFamily="Inter" fontWeight="700" fontSize="17" textLength="36" fill="#fff">NOV</text>
      <text x="38.500" y="70" textAnchor="middle" fontFamily="Inter" fontWeight="300" fontSize="50" textLength="42" fill="#1f1f1f">11</text>
    </Tile>
  );
}

function Contacts() {
  return (
    <svg className="size-[82px] overflow-visible drop-shadow-[0_1px_1px_rgba(0,0,0,0.4)]" viewBox="0 0 82 82">
      <defs>
        <linearGradient id="cob" x1="0" y1="0" x2="0" y2="1">
          <stop offset="0" stopColor="#b08c56" />
          <stop offset="1" stopColor="#9c7546" />
        </linearGradient>
      </defs>
      <path d="M76 10q10 2 10 8v12H76z" fill="#c9c9c9" />
      <path d="M76 30h10v15H76z" fill="#6bbcf0" />
      <path d="M76 45h10v14H76z" fill="#f09a38" />
      <path d="M76 59h10v8q-2 6-10 8z" fill="#69ce62" />
      <rect width="82" height="82" rx="17" fill="url(#cob)" />
      <path d="M6 8v66" stroke="#8d6b3e" strokeWidth="1.500" opacity=".6" />
      <clipPath id="coc"><circle cx="43" cy="41.500" r="25" /></clipPath>
      <circle cx="43" cy="41.500" r="25" fill="#a88450" stroke="#86643a" strokeWidth="1.800" />
      <circle cx="43" cy="35.500" r="9.300" fill="#8c6b3f" />
      <ellipse cx="43" cy="65" rx="20" ry="14" fill="#8c6b3f" clipPath="url(#coc)" />
    </svg>
  );
}

function Reminders() {
  return (
    <Tile id="rem" from="#ffffff" to="#f3f2f0">
      {["#2f7bee", "#e24a3b", "#e8912d"].map((c, i) => (
        <g key={c}>
          <circle cx="16" cy={21.3 + i * 20.4} r="6.300" fill="none" stroke={c} strokeWidth="1.500" />
          <circle cx="16" cy={21.3 + i * 20.4} r="4.200" fill={c} />
          <path d={`M31 ${21.3 + i * 20.4}h42`} stroke="#b3b4b8" strokeWidth="1.500" />
        </g>
      ))}
    </Tile>
  );
}

function Notes() {
  return (
    <Tile id="notes" from="#fafafa" to="#e6e4df">
      <defs>
        <linearGradient id="ny" x1="0" y1="0" x2="0" y2="1">
          <stop offset="0" stopColor="#fbdc66" />
          <stop offset="1" stopColor="#f6c437" />
        </linearGradient>
      </defs>
      <rect width="82" height="21" fill="url(#ny)" />
      <path d="M0 21.800h82" stroke="#a79a78" strokeWidth="1.600" />
      <path d="M2 25.300h80" stroke="#a5a5a5" strokeWidth="1.400" strokeDasharray="1.400 1.600" />
      <path d="M0 41.700h82M0 62h82" stroke="#d3d3d5" strokeWidth="1.500" />
    </Tile>
  );
}

function Freeform() {
  return (
    <Tile id="free" from="#ffffff" to="#ffffff">
      <defs>
        <linearGradient id="fo" x1="0" y1="0" x2="0" y2="1">
          <stop offset="0" stopColor="#f4b63f" />
          <stop offset=".5" stopColor="#ee8a52" />
          <stop offset="1" stopColor="#e8605f" />
        </linearGradient>
        <linearGradient id="fb" x1="0" y1="0" x2="0" y2="1">
          <stop offset="0" stopColor="#63dcfa" />
          <stop offset="1" stopColor="#54a3dd" />
        </linearGradient>
        <clipPath id="fbc"><rect x="27" y="11" width="45" height="45" rx="4" /></clipPath>
      </defs>
      <circle cx="33" cy="50" r="23.500" fill="url(#fo)" />
      <rect x="27" y="11" width="45" height="45" rx="4" fill="url(#fb)" />
      <circle cx="33" cy="50" r="23.500" fill="#84a4d2" clipPath="url(#fbc)" />
      <path d="M16.500 52C20 42 27 30.500 33 30.500c7.500 0 .5 19.500 7.500 19.500 5.500 0 8.500-15 13-15 6 0 1.500 12.500 7 12.500 4 0 6-9.500 13-10" fill="none" stroke="#163a5c" strokeWidth="4.500" strokeLinecap="round" />
    </Tile>
  );
}

function Tv() {
  return (
    <Tile id="tv" from="#2d3735" to="#0d1213">
      <g transform="translate(7 23)" color="#fff">
        <FaApple size={32} />
      </g>
      <text x="37" y="54.500" fontFamily="Inter" fontWeight="600" fontSize="36" textLength="33" lengthAdjust="spacingAndGlyphs" fill="#fff">tv</text>
    </Tile>
  );
}

function Podcasts() {
  return (
    <Tile id="pod" from="#bd6aec" to="#6b2fa9">
      <g fill="none" stroke="#fff" strokeWidth="3.300">
        <path d="M31.500 66a28 28 0 1 1 18.500 0" />
        <path d="M31 54.500a18 18 0 1 1 19.500 0" />
      </g>
      <circle cx="40.800" cy="36.700" r="6.500" fill="#fff" />
      <path d="M34 52c0-4 3-5.500 6.800-5.500s6.800 1.500 6.800 5.500c0 6-1 12-1.800 17-.5 3-2 4.500-5 4.500s-4.500-1.500-5-4.500C35 64 34 58 34 52z" fill="#fff" />
    </Tile>
  );
}

function Music() {
  return (
    <Tile id="mus" from="#ee6577" to="#e4373c">
      <path d="M29.500 22.500c0-1.700.7-2.500 2.300-2.800l26-6c1.500-.3 2.300.3 2.300 1.800v40c0 5-4 7.300-8.500 7.300-4 0-7.500-1.800-7.500-6 0-4.500 3.500-6 8-7 3-.6 3.900-1.200 3.900-4V29c0-1.500-.7-2-2.200-1.700L35 31.200c-1.500.3-2 1-2 2.500V61c0 5-4 7.300-8.500 7.300-4 0-7.500-1.800-7.500-6 0-4.500 3.500-6 7.500-7 3.500-.7 4.500-1.300 4.500-4z" fill="#fff" />
    </Tile>
  );
}

function AppStore() {
  return (
    <Tile id="as" from="#51b4ee" to="#2258d6">
      <g fill="none" stroke="#f4f8fd" strokeWidth="7" strokeLinecap="round">
        <path d="M46 19.500L29 50" />
        <path d="M36.500 19.500L61.500 62.500" />
        <path d="M16 51h29M60 51h6.500" />
        <path d="M22.500 60.500l-1.500 2.500" />
      </g>
    </Tile>
  );
}

function Settings() {
  return (
    <div className="relative size-[82px]">
      <Tile id="set" from="#d3dadd" to="#8b8883">
        <circle cx="41" cy="41.500" r="36" fill="#2b2c2d" />
        <circle cx="41" cy="41.500" r="31.500" fill="none" stroke="#8e8f90" strokeWidth="3.500" strokeDasharray="1.600 1.700" />
        <circle cx="41" cy="41.500" r="28" fill="none" stroke="#9b9c9d" strokeWidth="3.500" />
        <circle cx="41" cy="41.500" r="19.500" fill="none" stroke="#7c7d7e" strokeWidth="3" strokeDasharray="1.400 1.400" />
        <circle cx="41" cy="41.500" r="16.500" fill="#6a6b6b" stroke="#7f8081" strokeWidth="2.500" />
        <circle cx="41" cy="41.500" r="11" fill="#484949" />
        <path d="M41 41.500h26M41 41.500L27.500 18M41 41.500L27.500 65" stroke="#a2a3a4" strokeWidth="3.500" />
        <circle cx="41" cy="41.500" r="2.500" fill="#333" />
      </Tile>
      <span className="absolute -top-[12px] left-[56px] flex size-[39px] items-center justify-center rounded-full bg-[#e0483c] text-[24px] leading-none text-white">
        1
      </span>
    </div>
  );
}

function gearPath(cx: number, cy: number, teeth: number, outer: number, inner: number) {
  const step = (Math.PI * 2) / teeth;
  const pts: string[] = [];
  for (let i = 0; i < teeth; i++) {
    const a = i * step - Math.PI / 2 + step / 2;
    const at = (r: number, o: number) => `${(cx + r * Math.cos(a + o)).toFixed(1)} ${(cy + r * Math.sin(a + o)).toFixed(1)}`;
    pts.push(at(inner, -step * 0.36), at(outer, -step * 0.26), at(outer, step * 0.26), at(inner, step * 0.36));
  }
  return `M${pts.join("L")}Z`;
}

function Config() {
  const gear = gearPath(45.5, 43, 8, 33, 24);
  return (
    <svg className="h-[92px] w-[93px] -translate-y-[2px] overflow-visible drop-shadow-[0_2px_2px_rgba(0,0,0,0.5)]" viewBox="0 0 93 92">
      <defs>
        <linearGradient id="cfg" x1="0" y1="0" x2="1" y2="1">
          <stop offset="0" stopColor="#9db7e6" />
          <stop offset=".5" stopColor="#e4ecf9" />
          <stop offset="1" stopColor="#a9bfe8" />
        </linearGradient>
        <linearGradient id="cgg" x1="0" y1="0" x2="0" y2="1">
          <stop offset="0" stopColor="#c4c4cf" />
          <stop offset=".5" stopColor="#efeff4" />
          <stop offset="1" stopColor="#b6b6c2" />
        </linearGradient>
      </defs>
      <path d="M4 2h54c20 0 33 15 33 32v23c0 18-14 31-31 31H36C17 88 2 75 2 57V4q0-2 2-2z" fill="#fff" stroke="#46587c" strokeWidth="4" />
      <path d="M10 8l18 18h50v22c0 16-8 28-26 28H40C22 76 12 66 12 50z" fill="url(#cfg)" opacity=".85" />
      <path d={gear} transform="translate(0 2.500)" fill="#6f7083" stroke="#6f7083" strokeWidth="3" strokeLinejoin="round" />
      <path d={gear} fill="url(#cgg)" stroke="#8f90a2" strokeWidth="1" strokeLinejoin="round" />
      <circle cx="45.500" cy="37.500" r="13.500" fill="#cfdcf4" stroke="#686a80" strokeWidth="3" />
    </svg>
  );
}

function Chrome() {
  return (
    <Tile id="chr" from="#f7f4f5" to="#efeced">
      <circle cx="41" cy="43.500" r="35.500" fill="#4c9a52" opacity=".35" />
      <circle cx="41" cy="41.500" r="35.500" fill="#4c9e54" />
      <path d="M41 24h30.800A35.500 35.500 0 0 1 41 77L56 50z" fill="#f2bc42" />
      <path d="M11.500 22A35.500 35.500 0 0 1 71.900 24H41L26 50z" fill="#d94f3d" />
      <circle cx="41" cy="41.500" r="17.500" fill="#fff" />
      <circle cx="41" cy="41.500" r="14.300" fill="#3f7fe6" />
    </Tile>
  );
}

function Mongo() {
  return (
    <Tile id="mon" from="#ffffff" to="#ffffff">
      <path d="M41 14c6 8 13 15 13 26 0 10-5 17-12 22v7h-2v-7c-7-5-12-12-12-22 0-11 7-18 13-26z" fill="#2a6649" />
      <path d="M41 32l1.200 30h-2.400z" fill="#fff" />
    </Tile>
  );
}

function Postman() {
  return (
    <Tile id="post" from="#ee7548" to="#ee7548">
      <circle cx="60.500" cy="22" r="6.700" fill="#fff" />
      <path d="M61 17l4 4-5 2zM60 23l5 3" fill="none" stroke="#ee7548" strokeWidth="1.200" />
      <path d="M50 25.500l6 4.500-2 7-14 14.500L24 66l-8 1.500 3-4L32 48l-4-2.500 10-12z" fill="#fff" />
      <path d="M52 27L31 46.500M55 31L34 50.500M33 44l8 6M28.500 45.500l5 .5M31 50l6 4M18.500 63l3 4" fill="none" stroke="#ee7548" strokeWidth="1.100" />
    </Tile>
  );
}

function VsCode() {
  return (
    <Tile id="vs" from="#ffffff" to="#ffffff">
      <path d="M54 13L12.500 50.500c-1 1-1 2.200 0 3.200l3 2.800c1 1 2.500 1 3.500.2L54.500 29z" fill="#2865a4" />
      <path d="M54 70L12.500 33c-1-1-1-2.200 0-3.200l3-2.800c1-1 2.500-1 3.500-.2L54.500 54z" fill="#3079c4" />
      <path d="M54 12.500l13.500 6c1.200.6 1.800 1.500 1.800 3v40.500c0 1.500-.6 2.400-1.800 3L54 71z" fill="#479bea" />
    </Tile>
  );
}

function Messenger() {
  return (
    <Tile id="mes" from="#ffffff" to="#ffffff">
      <defs>
        <radialGradient id="meg" cx="20%" cy="100%" r="110%">
          <stop offset="0" stopColor="#1e90fb" />
          <stop offset=".55" stopColor="#9d3bf5" />
          <stop offset=".85" stopColor="#ef5287" />
          <stop offset="1" stopColor="#f8686b" />
        </radialGradient>
      </defs>
      <path d="M41 10.500c18.500 0 32 13.500 32 31.500S59.500 72.500 41 72.500c-3 0-6-.3-8.500-1l-8 3.200c-2.200.8-4-.2-4-2.500l-.3-6C13 60 9 52 9 42c0-18 13.500-31.500 32-31.500z" fill="url(#meg)" />
      <path d="M23 49.500l9-14.500c2-3 4.500-3 7-1.300l6 4.500c.8.600 1.700.6 2.500 0L57.500 32c1.700-1.300 3.500.3 2.500 2.200L51 48.500c-2 3-4.500 3-7 1.300L38 45.300c-.8-.6-1.700-.6-2.500 0L25.500 51.700c-1.700 1.300-3.500-.5-2.500-2.200z" fill="#fff" />
    </Tile>
  );
}

function Trash() {
  return (
    <svg className="h-[96px] w-[74px]" viewBox="0 0 74 96">
      <defs>
        <linearGradient id="tr" x1="0" y1="0" x2="1" y2="0">
          <stop offset="0" stopColor="#5e6468" />
          <stop offset=".35" stopColor="#969b9f" />
          <stop offset=".65" stopColor="#81868a" />
          <stop offset="1" stopColor="#565c60" />
        </linearGradient>
        <linearGradient id="trs" x1="0" y1="0" x2="0" y2="1">
          <stop offset="0" stopColor="#fff" stopOpacity=".05" />
          <stop offset=".7" stopColor="#000" stopOpacity=".28" />
          <stop offset="1" stopColor="#fff" stopOpacity=".12" />
        </linearGradient>
      </defs>
      <ellipse cx="37" cy="14" rx="35.500" ry="8.500" fill="#5a5e61" stroke="#a6aaad" strokeWidth="1.200" />
      <path d="M6 12l8-8 9-3 9 4 6 4 8-9 10 5 8 6 3 7-9 6H15z" fill="#e4e4e4" />
      <path d="M14 5l10 6-12 5zM32 6l4 9-8 2zM46 3l-3 9 12-5zM60 8l-2 11 7-4z" fill="#85888b" />
      <path d="M24 13l8-3-2 5z" fill="#3fc0d0" />
      <path d="M28 16l6-2-3 4z" fill="#6fc35a" />
      <path d="M42 15l8-7 6 7-6 5z" fill="#44557c" />
      <path d="M50 9l6 5-5 3z" fill="#b8623a" />
      <path d="M35 10l3 12 4-10z" fill="#d9b9a5" />
      <path d="M18 14l8 6-10 0z" fill="#2f3235" />
      <path d="M1.500 14c2 5 16 9 35.500 9s33.500-4 35.500-9l-8 70c-1 6-10 10-27.500 10S10.500 90 9.500 84z" fill="url(#tr)" />
      <path d="M1.500 14c2 5 16 9 35.500 9s33.500-4 35.500-9l-8 70c-1 6-10 10-27.500 10S10.500 90 9.500 84z" fill="url(#trs)" />
      <path d="M10 80c6 7 48 7 54 0l-.7 4c-1 6-9 10-26.300 10S11 90 10 84z" fill="#a4a9ac" opacity=".35" />
      <path d="M22 32q18 14 36-2-12 18-36 2z" fill="#c4c8ca" opacity=".35" />
    </svg>
  );
}

const dock: { C: () => React.ReactElement; open?: "gray" | "pink" }[] = [
  { C: Finder, open: "gray" }, { C: Launchpad }, { C: Safari }, { C: Messages }, { C: Mail },
  { C: Photos }, { C: FaceTime }, { C: Calendar }, { C: Contacts }, { C: Reminders },
  { C: Notes }, { C: Freeform }, { C: Tv }, { C: Podcasts }, { C: Music }, { C: AppStore },
  { C: Settings }, { C: Config }, { C: Chrome, open: "pink" }, { C: Mongo, open: "pink" },
  { C: Postman, open: "pink" }, { C: VsCode, open: "pink" }, { C: Messenger, open: "pink" },
];

function Dock() {
  return (
    <div className="relative ml-[92px] flex h-[132px] w-[2696px] shrink-0 items-start rounded-[38px] border-2 border-white/20 bg-[linear-gradient(90deg,#191d26_0%,#1a1e27_14%,#2c1821_19%,#391826_25%,#461b2d_30%,#4b1d22_37%,#541e1e_41%,#421723_46%,#3a1722_52%,#41192b_60%,#48192f_70%,#461a2c_75%,#521f25_82%,#5a1f1b_90%,#651f15_100%)] pl-[3px] shadow-[0_0_0_1px_rgba(0,0,0,0.5)]">
      {dock.map(({ C, open }, i) => (
        <div key={i} className="flex h-[128px] w-[109.82px] shrink-0 flex-col items-center">
          <div className="mt-[18px] flex h-[82px] items-center justify-center"><C /></div>
          {open && (
            <span className={`mt-[18px] size-2 rounded-full ${open === "gray" ? "bg-[#9a9fab]" : "bg-[#d59aab]"}`} />
          )}
        </div>
      ))}
      <span className="ml-[25px] mt-[16px] h-24 w-0.5 bg-[#9c5f56]" />
      <div className="ml-[40px] mt-[9px]"><Trash /></div>
    </div>
  );
}

export default function App() {
  return (
    <div className="flex h-[1800px] w-[2880px] flex-col overflow-hidden bg-[linear-gradient(90deg,#04121f_0%,#051422_19%,#2a041b_21%,#2f0619_26%,#3a0d2c_33.700%,#3f1018_34%,#571c14_43.500%,#4c0a24_44%,#30051b_52%,#3d0f30_61%,#5b2350_70.500%,#2d0a25_71%,#2f0a27_73.500%,#5a1238_74%,#4d1030_80%,#5a1a1c_90%,#8a2e15_97%,#8a2c16_100%)] font-['Inter',sans-serif] antialiased">
      <MenuBar />
      <div className="h-[2px] w-full shrink-0 bg-[linear-gradient(90deg,#04192e_0%,#04192e_22%,#8f5a20_22%,#7d3a1c_45%,#5c1d1c_75%,#3a1724_96%,#061a30_100%)]" />
      <div className="relative mt-[2px] flex h-[1606px] w-[2880px] shrink-0 flex-col overflow-hidden rounded-[22px] border-2 border-[#5f5f61] border-t-[#6a6a6d] shadow-[0_0_0_1px_#000,0_0_0_2px_#55565a,0_20px_50px_rgba(0,0,0,0.9)]">
        <TabStrip />
        <Toolbar />
        <BookmarksBar />
        <div className="h-0.5 w-full shrink-0 bg-[#5d5e63]" />
        <Page />
      </div>
      <Dock />
    </div>
  );
}
